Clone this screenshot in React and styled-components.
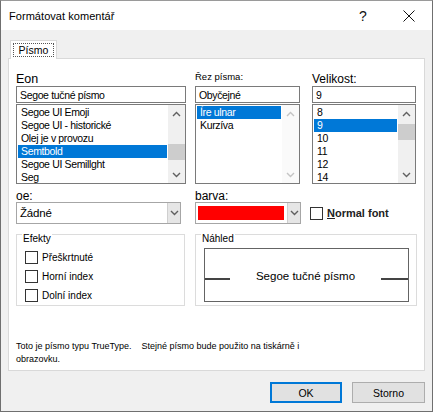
import React from 'react';
import styled, { createGlobalStyle } from 'styled-components';

const Global = createGlobalStyle`
  html, body { margin: 0; padding: 0; background: #fff; }
  body { font-family: "Liberation Sans", Arial, sans-serif; color: #000; }
  * { box-sizing: border-box; }
`;

const Window = styled.div`
  width: 433px;
  height: 412px;
  border: 1px solid #6f6f6f;
  border-top-color: #9a9a9a;
  display: flex;
  flex-direction: column;
  background: #f0f0f0;
  overflow: hidden;
`;

const TitleBar = styled.div`
  height: 29px;
  flex-shrink: 0;
  background: #fff;
  display: flex;
  align-items: center;
  padding-left: 8px;
`;

const Title = styled.div`
  flex: 1;
  font-size: 11px;
  letter-spacing: 0.05px;
`;

const CaptionButton = styled.div`
  width: 46px;
  height: 29px;
  display: flex;
  align-items: center;
  justify-content: center;
  font-size: 14px;
  color: #111;
`;

const Body = styled.div`
  flex: 1;
  display: flex;
  flex-direction: column;
  padding: 10px 7px 0 7px;
`;

const TabStrip = styled.div`
  display: flex;
  height: 18px;
  padding-left: 2px;
  position: relative;
  z-index: 1;
`;

const Tab = styled.div`
  width: 47px;
  height: 19px;
  background: #fff;
  border: 1px solid #d9d9d9;
  border-bottom: none;
  padding: 2px 2px 0 2px;
`;

const TabFocus = styled.div`
  height: 14px;
  border: 1px dotted #555;
  display: flex;
  align-items: center;
  justify-content: center;
  font-size: 10.5px;
`;

const Panel = styled.div`
  height: 313px;
  background: #fff;
  border: 1px solid #d9d9d9;
  padding: 11px 7px 0 7px;
  display: flex;
  flex-direction: column;
`;

const Row = styled.div`
  display: flex;
  margin-top: ${p => p.$mt || 0}px;
`;

const Column = styled.div`
  display: flex;
  flex-direction: column;
  width: ${p => p.$w}px;
  margin-left: ${p => p.$ml || 0}px;
`;

const Label = styled.div`
  height: ${p => p.$h || 16}px;
  display: flex;
  align-items: flex-end;
  padding-bottom: ${p => p.$pb || 0}px;
  font-size: ${p => p.$size}px;
  line-height: 1;
  white-space: nowrap;
`;

const TextField = styled.div`
  height: 17px;
  border: 1px solid #7a7a7a;
  padding: 0 3px;
  display: flex;
  align-items: center;
  font-size: 10.5px;
  letter-spacing: -0.35px;
  white-space: nowrap;
`;

const ListBox = styled.div`
  margin-top: 1px;
  height: 80px;
  border: 1px solid #7a7a7a;
  display: flex;
  overflow: hidden;
`;

const Items = styled.div`
  flex: 1;
  padding: 1px 1px 0 1px;
  overflow: hidden;
`;

const Item = styled.div`
  height: 13px;
  line-height: 13px;
  padding-left: 3px;
  font-size: 10.5px;
  letter-spacing: -0.35px;
  white-space: nowrap;
  overflow: hidden;
  background: ${p => (p.$selected ? '#0078d7' : 'transparent')};
  color: ${p => (p.$selected ? '#fff' : '#000')};
`;

const ScrollBar = styled.div`
  width: 17px;
  display: flex;
  flex-direction: column;
  background: ${p => (p.$disabled ? '#fafafa' : '#f0f0f0')};
`;

const ArrowButton = styled.div`
  height: 17px;
  display: flex;
  align-items: center;
  justify-content: center;
`;

const Track = styled.div`
  flex: 1;
`;

const Thumb = styled.div`
  height: 16px;
  background: #cdcdcd;
`;

const Chevron = ({ up, color = '#606060' }) => (
  <svg width="9" height="6" viewBox="0 0 9 6">
    <polyline
      points={up ? '1,5 4.5,1.5 8,5' : '1,1 4.5,4.5 8,1'}
      fill="none"
      stroke={color}
      strokeWidth="1.4"
    />
  </svg>
);

const Scroll = ({ disabled, thumbTop }) => (
  <ScrollBar $disabled={disabled}>
    <ArrowButton>
      <Chevron up color={disabled ? '#c4c4c4' : '#606060'} />
    </ArrowButton>
    <Track>
      {!disabled && <Thumb style={{ marginTop: thumbTop }} />}
    </Track>
    <ArrowButton>
      <Chevron color={disabled ? '#c4c4c4' : '#606060'} />
    </ArrowButton>
  </ScrollBar>
);

const Combo = styled.div`
  height: 22px;
  border: 1px solid #a6a6a6;
  display: flex;
  background: #fff;
`;

const ComboField = styled.div`
  flex: 1;
  display: flex;
  align-items: center;
  padding: ${p => (p.$swatch ? '3px 3px 3px 2px' : '0 3px')};
  font-size: 11.5px;
  letter-spacing: -0.2px;
`;

const Swatch = styled.div`
  flex: 1;
  height: 100%;
  background: ${p => p.$color};
`;

const DropButton = styled.div`
  width: 13px;
  background: #e6e6e6;
  border-left: 1px solid #cfcfcf;
  display: flex;
  align-items: center;
  justify-content: center;
`;

const CheckRow = styled.label`
  display: flex;
  align-items: center;
  height: ${p => p.$h || 19}px;
  gap: 4px;
  font-size: ${p => p.$size || 10}px;
  font-weight: ${p => (p.$bold ? 700 : 400)};
  color: ${p => (p.$bold ? '#222' : '#000')};
  white-space: nowrap;
`;

const Box = styled.span`
  width: 13px;
  height: 13px;
  border: 1px solid #333;
  background: #fff;
  flex-shrink: 0;
`;

const Underlined = styled.span`
  text-decoration: underline;
`;

const Group = styled.div`
  position: relative;
  width: ${p => p.$w}px;
  height: 72px;
  margin-left: ${p => p.$ml || 0}px;
  border: 1px solid #dcdcdc;
  padding: 13px 0 0 8px;
`;

const Legend = styled.div`
  position: absolute;
  top: -2px;
  left: 5px;
  padding: 0 1px;
  background: #fff;
  font-size: 10px;
  line-height: 12px;
`;

const Preview = styled.div`
  height: 54px;
  margin: 0 7px 0 0;
  border: 1px solid #646464;
  display: flex;
  align-items: center;
`;

const PreviewLine = styled.div`
  width: ${p => p.$w}px;
  height: 2px;
  background: #444;
  margin-top: 8px;
`;

const PreviewText = styled.div`
  flex: 1;
  text-align: center;
  font-size: 11.5px;
  margin-top: 2px;
`;

const Note = styled.div`
  margin-top: 34px;
  font-size: 9px;
  line-height: 13px;
  white-space: pre;
`;

const Footer = styled.div`
  display: flex;
  justify-content: flex-end;
  gap: 10px;
  margin-top: 11px;
`;

const Button = styled.div`
  width: ${p => p.$w}px;
  height: 21px;
  background: #e1e1e1;
  border: ${p => (p.$default ? '2px solid #0078d7' : '1px solid #adadad')};
  display: flex;
  align-items: center;
  justify-content: center;
  font-size: 10.5px;
`;

const fonts = [
  'Segoe UI Emoji',
  'Segoe UI - historické',
  'Olej je v provozu',
  'Semtbold',
  'Segoe UI Semillght',
  'Seg',
];
const styles = ['Íre ulnar', 'Kurzíva'];
const sizes = ['8', '9', '10', '11', '12', '14'];

export default function App() {
  return (
    <>
      <Global />
      <Window>
        <TitleBar>
          <Title>Formátovat komentář</Title>
          <CaptionButton>?</CaptionButton>
          <CaptionButton>
            <svg width="12" height="12" viewBox="0 0 12 12">
              <path d="M0.5 0.5 L11.5 11.5 M11.5 0.5 L0.5 11.5" stroke="#111" strokeWidth="1" />
            </svg>
          </CaptionButton>
        </TitleBar>
        <Body>
          <TabStrip>
            <Tab>
              <TabFocus>Písmo</TabFocus>
            </Tab>
          </TabStrip>
          <Panel>
            <Row>
              <Column $w={170}>
                <Label $size={12.5} $pb={1}>Eon</Label>
                <TextField>Segoe tučné písmo</TextField>
                <ListBox>
                  <Items>
                    {fonts.map(f => (
                      <Item key={f} $selected={f === 'Semtbold'}>{f}</Item>
                    ))}
                  </Items>
                  <Scroll thumbTop={22} />
                </ListBox>
              </Column>
              <Column $w={105} $ml={9}>
                <Label $size={9.5} $pb={5}>Řez písma:</Label>
                <TextField>Obyčejné</TextField>
                <ListBox>
                  <Items>
                    {styles.map(s => (
                      <Item key={s} $selected={s === 'Íre ulnar'}>{s}</Item>
                    ))}
                  </Items>
                  <Scroll disabled />
                </ListBox>
              </Column>
              <Column $w={104} $ml={12}>
                <Label $size={12} $pb={1}>Velikost:</Label>
                <TextField>9</TextField>
                <ListBox>
                  <Items>
                    {sizes.map(s => (
                      <Item key={s} $selected={s === '9'}>{s}</Item>
                    ))}
                  </Items>
                  <Scroll thumbTop={2} />
                </ListBox>
              </Column>
            </Row>

            <Row $mt={6}>
              <Column $w={165}>
                <Label $size={12} $h={12}>oe:</Label>
                <Combo>
                  <ComboField>Žádné</ComboField>
                  <DropButton><Chevron /></DropButton>
                </Combo>
              </Column>
              <Column $w={106} $ml={14}>
                <Label $size={12} $h={12}>barva:</Label>
                <Combo>
                  <ComboField $swatch><Swatch $color="#ff0000" /></ComboField>
                  <DropButton><Chevron /></DropButton>
                </Combo>
              </Column>
              <Column $w={100} $ml={9}>
                <Label $size={12} $h={12} />
                <CheckRow $h={22} $size={11} $bold>
                  <Box />
                  <span><Underlined>N</Underlined>ormal font</span>
                </CheckRow>
              </Column>
            </Row>

            <Row $mt={10}>
              <Group $w={169}>
                <Legend>Efekty</Legend>
                <CheckRow><Box /><span>Přeškrtnuté</span></CheckRow>
                <CheckRow><Box /><span>Horní index</span></CheckRow>
                <CheckRow><Box /><span>Dolní index</span></CheckRow>
              </Group>
              <Group $w={222} $ml={10}>
                <Legend>Náhled</Legend>
                <Preview>
                  <PreviewLine $w={25} />
                  <PreviewText>Segoe tučné písmo</PreviewText>
                  <PreviewLine $w={27} />
                </Preview>
              </Group>
            </Row>

            <Note>{'Toto je písmo typu TrueType.    Stejné písmo bude použito na tiskárně i\nobrazovku.'}</Note>
          </Panel>
          <Footer>
            <Button $w={72} $default>OK</Button>
            <Button $w={73}>Storno</Button>
          </Footer>
        </Body>
      </Window>
    </>
  );
}
